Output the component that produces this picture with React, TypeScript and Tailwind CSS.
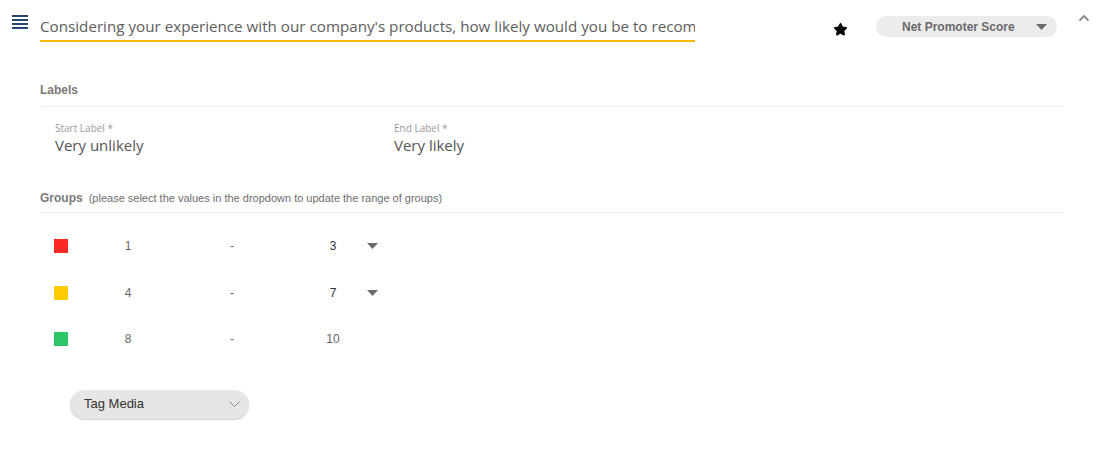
import { Star } from "lucide-react";

const groups = [
  { color: "bg-[#fb2a25]", from: "1", to: "3", select: true },
  { color: "bg-[#fecb00]", from: "4", to: "7", select: true },
  { color: "bg-[#2cc568]", from: "8", to: "10", select: false },
];

function Caret() {
  return (
    <svg width="11" height="6" viewBox="0 0 11 6" className="block">
      <path d="M0 0h11L5.5 6z" fill="#6b6b6b" />
    </svg>
  );
}

export default function App() {
  return (
    <div className="relative h-[474px] w-[1104px] overflow-hidden bg-white font-['Liberation_Sans',Arial,sans-serif]">
      {/* header */}
      <div className="flex h-[44px] items-start">
        <svg width="16" height="14" viewBox="0 0 16 14" className="ml-[12px] mt-[15px]">
          <g fill="#284770">
            <rect x="0" y="0" width="16" height="2" />
            <rect x="0" y="4" width="16" height="2" />
            <rect x="0" y="8" width="16" height="2" />
            <rect x="0" y="12" width="16" height="2" />
          </g>
        </svg>
        <input
          readOnly
          value="Considering your experience with our company's products, how likely would you be to recommend us to a friend?"
          className="ml-[12px] mt-[15px] h-[27px] w-[655px] border-b-2 border-[#f6b900] bg-transparent pb-[3px] font-['Open_Sans',sans-serif] text-[15.2px] leading-[22px] text-[#5d5d5d] outline-none"
        />
        <Star className="ml-[138px] mt-[22px] h-[15px] w-[15px] fill-black text-black" strokeWidth={1.5} />
        <button className="ml-[28px] mt-[16px] flex h-[21px] w-[181px] items-center rounded-full bg-[#ececec] pl-[26px] pr-[10px] text-[12px] font-bold text-[#6a6a6a]">
          <span>Net Promoter Score</span>
          <span className="ml-auto">
            <Caret />
          </span>
        </button>
        <svg width="12" height="8" viewBox="0 0 12 8" className="ml-[21px] mt-[14px]">
          <path d="M1.5 6.5L6 2l4.5 4.5" fill="none" stroke="#8a8a8a" strokeWidth="1.8" />
        </svg>
      </div>

      <div className="ml-[40px] w-[1024px]">
        {/* labels */}
        <div className="mt-[38px] border-b border-dotted border-[#e3e3e3] pb-[8px] text-[12px] font-bold leading-[16px] text-[#7a7a7a]">
          Labels
        </div>
        <div className="flex pl-[15px] pt-[14px] font-['Open_Sans',sans-serif]">
          <div className="w-[339px]">
            <div className="text-[10px] leading-[14px] text-[#9a9a9a]">Start Label *</div>
            <div className="text-[15px] leading-[20px] text-[#555]">Very unlikely</div>
          </div>
          <div>
            <div className="text-[10px] leading-[14px] text-[#9a9a9a]">End Label *</div>
            <div className="text-[15px] leading-[20px] text-[#555]">Very likely</div>
          </div>
        </div>

        {/* groups */}
        <div className="mt-[35px] flex items-baseline border-b border-dotted border-[#e3e3e3] pb-[6px] leading-[16px]">
          <span className="text-[12px] font-bold text-[#7a7a7a]">Groups</span>
          <span className="ml-[6px] text-[11px] text-[#6d6d6d]">
            (please select the values in the dropdown to update the range of groups)
          </span>
        </div>
        <div className="mt-[10px]">
          {groups.map((g) => (
            <div key={g.from} className="flex h-[46.5px] items-center text-[12px] text-[#666]">
              <div className={`ml-[14px] h-[14px] w-[14px] ${g.color}`} />
              <div className="ml-[40px] w-[40px] text-center">{g.from}</div>
              <div className="ml-[64px] w-[40px] text-center">-</div>
              <div className={`ml-[61px] w-[40px] text-center ${g.select ? "text-[#333]" : ""}`}>
                {g.to}
              </div>
              {g.select && (
                <div className="ml-[14px]">
                  <Caret />
                </div>
              )}
            </div>
          ))}
        </div>

        {/* tag media */}
        <button className="ml-[30px] mt-[27px] flex h-[29px] w-[179px] items-center rounded-full bg-[#e5e5e5] pl-[14px] pr-[9px] text-[13px] text-[#333] shadow-[0_1px_1px_rgba(0,0,0,0.18)]">
          <span>Tag Media</span>
          <svg width="11" height="6" viewBox="0 0 11 6" className="ml-auto">
            <path d="M0.5 0.5l5 5 5-5" fill="none" stroke="#8a8a8a" strokeWidth="1" />
          </svg>
        </button>
      </div>
    </div>
  );
}
